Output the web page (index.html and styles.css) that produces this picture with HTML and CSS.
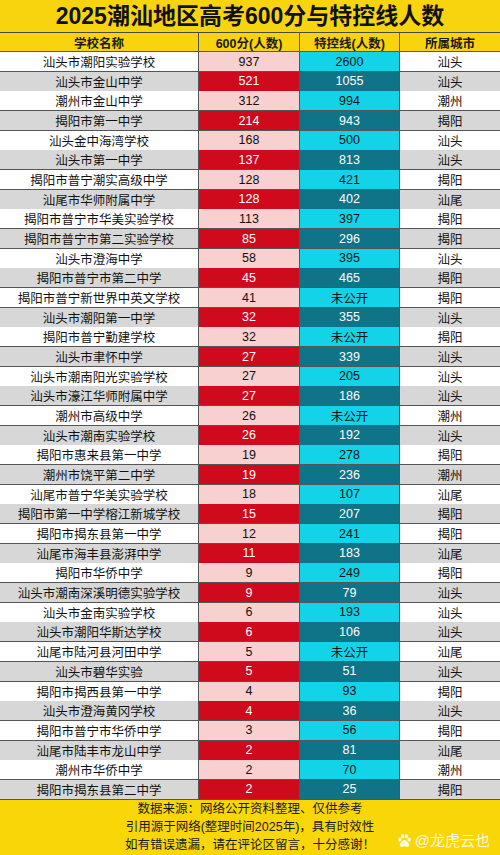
FILE: index.html
```html
<!DOCTYPE html>
<html lang="zh-CN">
<head>
    <meta charset="UTF-8">
    <meta name="viewport" content="width=device-width, initial-scale=1.0">
    <title>2025潮汕地区高考600分与特控线人数</title>
    <link rel="stylesheet" href="styles.css">
</head>
<body>
    <div class="sheet">
        <h1 class="title">2025潮汕地区高考600分与特控线人数</h1>

        <div class="row head">
            <div class="cell">学校名称</div>
            <div class="cell">600分(人数)</div>
            <div class="cell">特控线(人数)</div>
            <div class="cell">所属城市</div>
        </div>

        <div id="rows"></div>

        <div class="footer">
            <p>数据来源：网络公开资料整理、仅供参考</p>
            <p>引用源于网络(整理时间2025年)，具有时效性</p>
            <p>如有错误遗漏，请在评论区留言，十分感谢！</p>
            <div class="mark">
                <svg width="15" height="15" viewBox="0 0 16 16">
                    <ellipse cx="3" cy="7" rx="1.8" ry="2.3"/>
                    <ellipse cx="6" cy="3.5" rx="1.8" ry="2.3"/>
                    <ellipse cx="10" cy="3.5" rx="1.8" ry="2.3"/>
                    <ellipse cx="13" cy="7" rx="1.8" ry="2.3"/>
                    <path d="M8 7.5c-2.5 0-5 3.5-5 5.5 0 1.5 1.5 2 3 1.6 1-.3 1.3-.5 2-.5s1 .2 2 .5c1.5.4 3-.1 3-1.6 0-2-2.5-5.5-5-5.5z"/>
                </svg>
                <span>@龙虎云也</span>
            </div>
        </div>
    </div>

    <script>
        const schools = [
            ['汕头市潮阳实验学校', '937', '2600', '汕头'],
            ['汕头市金山中学', '521', '1055', '汕头'],
            ['潮州市金山中学', '312', '994', '潮州'],
            ['揭阳市第一中学', '214', '943', '揭阳'],
            ['汕头金中海湾学校', '168', '500', '汕头'],
            ['汕头市第一中学', '137', '813', '汕头'],
            ['揭阳市普宁潮实高级中学', '128', '421', '揭阳'],
            ['汕尾市华师附属中学', '128', '402', '汕尾'],
            ['揭阳市普宁市华美实验学校', '113', '397', '揭阳'],
            ['揭阳市普宁市第二实验学校', '85', '296', '揭阳'],
            ['汕头市澄海中学', '58', '395', '汕头'],
            ['揭阳市普宁市第二中学', '45', '465', '揭阳'],
            ['揭阳市普宁新世界中英文学校', '41', '未公开', '揭阳'],
            ['汕头市潮阳第一中学', '32', '355', '汕头'],
            ['揭阳市普宁勤建学校', '32', '未公开', '揭阳'],
            ['汕头市聿怀中学', '27', '339', '汕头'],
            ['汕头市潮南阳光实验学校', '27', '205', '汕头'],
            ['汕头市濠江华师附属中学', '27', '186', '汕头'],
            ['潮州市高级中学', '26', '未公开', '潮州'],
            ['汕头市潮南实验学校', '26', '192', '汕头'],
            ['揭阳市惠来县第一中学', '19', '278', '揭阳'],
            ['潮州市饶平第二中学', '19', '236', '潮州'],
            ['汕尾市普宁华美实验学校', '18', '107', '汕尾'],
            ['揭阳市第一中学榕江新城学校', '15', '207', '揭阳'],
            ['揭阳市揭东县第一中学', '12', '241', '揭阳'],
            ['汕尾市海丰县澎湃中学', '11', '183', '汕尾'],
            ['揭阳市华侨中学', '9', '249', '揭阳'],
            ['汕头市潮南深溪明德实验学校', '9', '79', '汕头'],
            ['汕头市金南实验学校', '6', '193', '汕头'],
            ['汕头市潮阳华斯达学校', '6', '106', '汕头'],
            ['汕尾市陆河县河田中学', '5', '未公开', '汕尾'],
            ['汕头市碧华实验', '5', '51', '汕头'],
            ['揭阳市揭西县第一中学', '4', '93', '揭阳'],
            ['汕头市澄海黄冈学校', '4', '36', '汕头'],
            ['揭阳市普宁市华侨中学', '3', '56', '揭阳'],
            ['汕尾市陆丰市龙山中学', '2', '81', '汕尾'],
            ['潮州市华侨中学', '2', '70', '潮州'],
            ['揭阳市揭东县第二中学', '2', '25', '揭阳']
        ];

        const rows = document.getElementById('rows');
        schools.forEach((s, i) => {
            const row = document.createElement('div');
            row.className = 'row ' + (i % 2 ? 'dark' : 'light');
            row.innerHTML = `
                <div class="cell">${s[0]}</div>
                <div class="cell score">${s[1]}</div>
                <div class="cell line">${s[2]}</div>
                <div class="cell">${s[3]}</div>
            `;
            rows.appendChild(row);
        });
    </script>
</body>
</html>
```

FILE: styles.css
```css
* {
    margin: 0;
    padding: 0;
    box-sizing: border-box;
}

body {
    background-color: #fff;
    font-family: 'Liberation Sans', 'Noto Sans CJK SC', sans-serif;
    color: #111;
}

.sheet {
    width: 500px;
    position: relative;
}

.title {
    height: 33px;
    background-color: #f8d40f;
    border-bottom: 1px solid #4a4a4a;
    font-size: 23px;
    font-weight: bold;
    line-height: 32px;
    text-align: center;
    color: #111;
}

.row {
    display: grid;
    grid-template-columns: 198px 101px 100px 101px;
    height: 19.68px;
    border-bottom: 1px solid #555;
    font-size: 12.5px;
    text-align: center;
}

.cell {
    display: flex;
    align-items: center;
    justify-content: center;
    border-left: 1px solid #555;
}

.cell:first-child {
    border-left: none;
}

.head {
    height: 19px;
    background-color: #f8d40f;
    font-weight: bold;
    font-size: 12.5px;
    color: #1a1a1a;
}

.light .cell {
    background-color: #fff;
}

.light .score {
    background-color: #f8d0d0;
}

.light .line {
    background-color: #13d3e8;
}

.dark .cell {
    background-color: #d7d7d7;
}

.dark .score {
    background-color: #cf0a1c;
    color: #fff;
}

.dark .line {
    background-color: #0f7488;
    color: #fff;
}

.footer {
    height: 55px;
    background-color: #f9d608;
    font-size: 12.5px;
    line-height: 18.3px;
    text-align: center;
    color: #1a1a1a;
    position: relative;
}

.mark {
    position: absolute;
    right: 10px;
    bottom: 5px;
    display: flex;
    align-items: center;
    gap: 3px;
    color: rgba(255, 255, 255, 0.85);
    font-size: 15px;
    line-height: 18px;
}

.mark svg {
    fill: rgba(255, 255, 255, 0.85);
}
```
